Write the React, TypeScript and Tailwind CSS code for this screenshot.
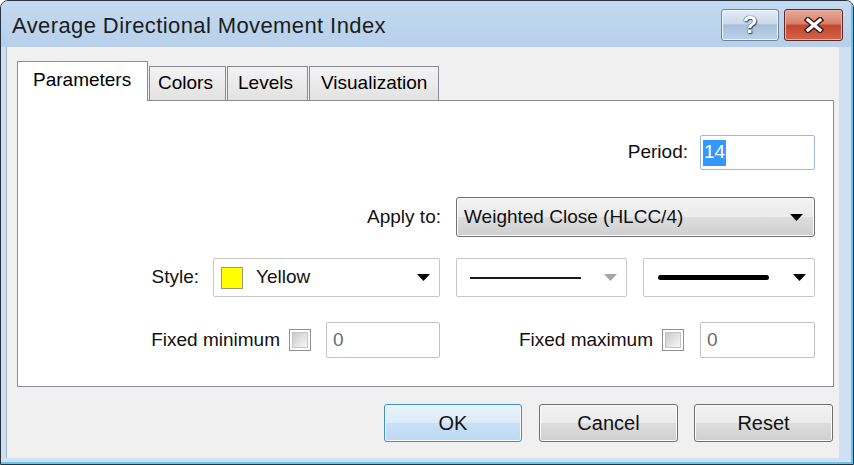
function Caret({ color = "#000000" }: { color?: string }) {
  return (
    <svg width="13" height="7" viewBox="0 0 13 7" className="shrink-0">
      <path d="M0 0H13L6.5 7Z" fill={color} />
    </svg>
  );
}

function Checkbox() {
  return (
    <div className="h-[22px] w-[22px] shrink-0 border border-[#8e8f8f] bg-white p-[2px]">
      <div className="h-full w-full border border-[#c4c4c4] bg-gradient-to-br from-[#cbcbcb] to-[#f7f7f7]" />
    </div>
  );
}

function DisabledInput({ width }: { width: string }) {
  return (
    <div className={`${width} flex h-[36px] shrink-0 items-center rounded-[2px] border border-[#c3c3c3] bg-white pl-[6px] text-[19px] text-[#6d6d6d]`}>
      0
    </div>
  );
}

const buttonBase =
  "flex h-[38px] items-center justify-center rounded-[3px] border text-[20px] text-[#111] shadow-[inset_0_0_0_1px_#fbfbfb]";
const grayButton =
  "border-[#707070] bg-[linear-gradient(to_bottom,#f2f2f2_0%,#ebebeb_50%,#dddddd_51%,#cfcfcf_100%)]";

export default function App() {
  return (
    <div className="h-[465px] w-[854px] bg-white font-['Liberation_Sans',Arial,sans-serif] text-black">
      <div className="h-full overflow-hidden rounded-t-[8px] border border-[#26323f] bg-[#cfe0f2]">
        <div className="flex h-full flex-col border-b-2 border-r-2 border-[#6cc3ea]">
          {/* Title bar */}
          <div className="flex h-[46px] shrink-0 items-start justify-between bg-gradient-to-b from-[#c4daf1] to-[#b7cfea] pl-[11px] pr-[8px]">
            <div className="pt-[12px] text-[22px] leading-[26px] tracking-[0.4px] text-[#1c1c1c]">
              Average Directional Movement Index
            </div>
            <div className="mt-[8px] flex gap-[5px]">
              <div className="flex h-[32px] w-[58px] items-center justify-center rounded-[3px] border border-[#6f84a0] bg-[linear-gradient(to_bottom,#e4edf7_0%,#cbd9ea_45%,#a9bfd9_50%,#bcd2ea_100%)] shadow-[inset_0_0_0_1px_#eef4fb]">
                <span className="text-[24px] font-bold leading-none text-white [text-shadow:0_0_1px_#34465e,0_0_1px_#34465e,1px_1px_1px_#34465e]">
                  ?
                </span>
              </div>
              <div className="flex h-[32px] w-[59px] items-center justify-center rounded-[3px] border border-[#5a2a26] bg-[linear-gradient(to_bottom,#e8ab9b_0%,#d8806b_45%,#c24630_52%,#d2654a_100%)] shadow-[inset_0_0_0_1px_#eeb3a3]">
                <svg width="20" height="16" viewBox="0 0 20 16">
                  <path d="M4 3L16 13M16 3L4 13" stroke="#3b1713" strokeWidth="6" strokeLinecap="square" />
                  <path d="M4 3L16 13M16 3L4 13" stroke="#ffffff" strokeWidth="3.2" strokeLinecap="square" />
                </svg>
              </div>
            </div>
          </div>

          {/* Dialog body */}
          <div className="mb-[4px] ml-[5px] mr-[12px] flex flex-1 flex-col border-l border-[#a3b3c5] bg-[#f0f0f0] pl-[10px] pr-[5px] pt-[14px]">
            {/* Tabs */}
            <div className="relative z-10 -mb-px flex h-[40px] items-end gap-px text-[19px] leading-[22px]">
              <div className="h-[40px] w-[131px] border border-b-0 border-[#898c95] bg-white pl-[15px] pt-[7px]">
                Parameters
              </div>
              <div className="mb-px h-[34px] w-[77px] border border-b-0 border-[#898c95] bg-gradient-to-b from-[#f3f3f3] to-[#e2e2e2] pl-[8px] pt-[5px]">
                Colors
              </div>
              <div className="mb-px h-[34px] w-[81px] border border-b-0 border-[#898c95] bg-gradient-to-b from-[#f3f3f3] to-[#e2e2e2] pl-[10px] pt-[5px]">
                Levels
              </div>
              <div className="mb-px h-[34px] w-[130px] border border-b-0 border-[#898c95] bg-gradient-to-b from-[#f3f3f3] to-[#e2e2e2] pl-[11px] pt-[5px]">
                Visualization
              </div>
            </div>

            {/* Panel */}
            <div className="flex h-[287px] w-[817px] flex-col border border-[#898c95] bg-white pr-[18px] text-[19px] text-[#111]">
              {/* Period */}
              <div className="mt-[34px] flex items-center justify-end">
                <span>Period:</span>
                <div className="ml-[12px] flex h-[35px] w-[115px] items-center rounded-[2px] border border-[#9db9d9] pl-[2px]">
                  <span className="flex h-[26px] items-center bg-[#3399ff] px-px text-white">14</span>
                </div>
              </div>

              {/* Apply to */}
              <div className="mt-[27px] flex items-center justify-end">
                <span>Apply to:</span>
                <div className="ml-[15px] flex h-[40px] w-[359px] items-center justify-between rounded-[3px] border border-[#707070] bg-[linear-gradient(to_bottom,#f2f2f2_0%,#ebebeb_50%,#dddddd_51%,#cfcfcf_100%)] pl-[7px] pr-[11px] shadow-[inset_0_0_0_1px_#fafafa]">
                  <span>Weighted Close (HLCC/4)</span>
                  <Caret />
                </div>
              </div>

              {/* Style */}
              <div className="mt-[21px] flex items-center justify-end">
                <span>Style:</span>
                <div className="ml-[14px] flex h-[39px] w-[227px] items-center rounded-[2px] border border-[#c7c7c7] pl-[7px] pr-[9px]">
                  <div className="h-[22px] w-[22px] border border-[#9a9a7a] bg-[#ffff00]" />
                  <span className="ml-[13px] flex-1">Yellow</span>
                  <Caret />
                </div>
                <div className="ml-[16px] flex h-[39px] w-[171px] items-center rounded-[2px] border border-[#c7c7c7] pl-[13px] pr-[9px]">
                  <div className="h-[2px] w-[111px] bg-[#1a1a1a]" />
                  <div className="flex-1" />
                  <Caret color="#a6a6a6" />
                </div>
                <div className="ml-[16px] flex h-[39px] w-[172px] items-center rounded-[2px] border border-[#c7c7c7] pl-[14px] pr-[8px]">
                  <div className="h-[5px] w-[111px] rounded-full bg-black" />
                  <div className="flex-1" />
                  <Caret />
                </div>
              </div>

              {/* Fixed min / max */}
              <div className="mt-[25px] flex items-center justify-end">
                <span>Fixed minimum</span>
                <div className="ml-[9px]">
                  <Checkbox />
                </div>
                <div className="ml-[15px]">
                  <DisabledInput width="w-[114px]" />
                </div>
                <div className="ml-[16px] flex w-[359px] items-center justify-end">
                  <span>Fixed maximum</span>
                  <div className="ml-[9px]">
                    <Checkbox />
                  </div>
                  <div className="ml-[16px]">
                    <DisabledInput width="w-[115px]" />
                  </div>
                </div>
              </div>
            </div>

            {/* Buttons */}
            <div className="mr-px mt-[17px] flex justify-end">
              <div className={`${buttonBase} w-[138px] border-[#3d8fd3] bg-[linear-gradient(to_bottom,#e9f3fc_0%,#dcebf9_50%,#c9e0f5_51%,#bcd8f1_100%)] shadow-[inset_0_0_0_1px_#f4faff]`}>
                OK
              </div>
              <div className={`${buttonBase} ${grayButton} ml-[17px] w-[139px]`}>Cancel</div>
              <div className={`${buttonBase} ${grayButton} ml-[16px] w-[139px]`}>Reset</div>
            </div>
          </div>
        </div>
      </div>
    </div>
  );
}
